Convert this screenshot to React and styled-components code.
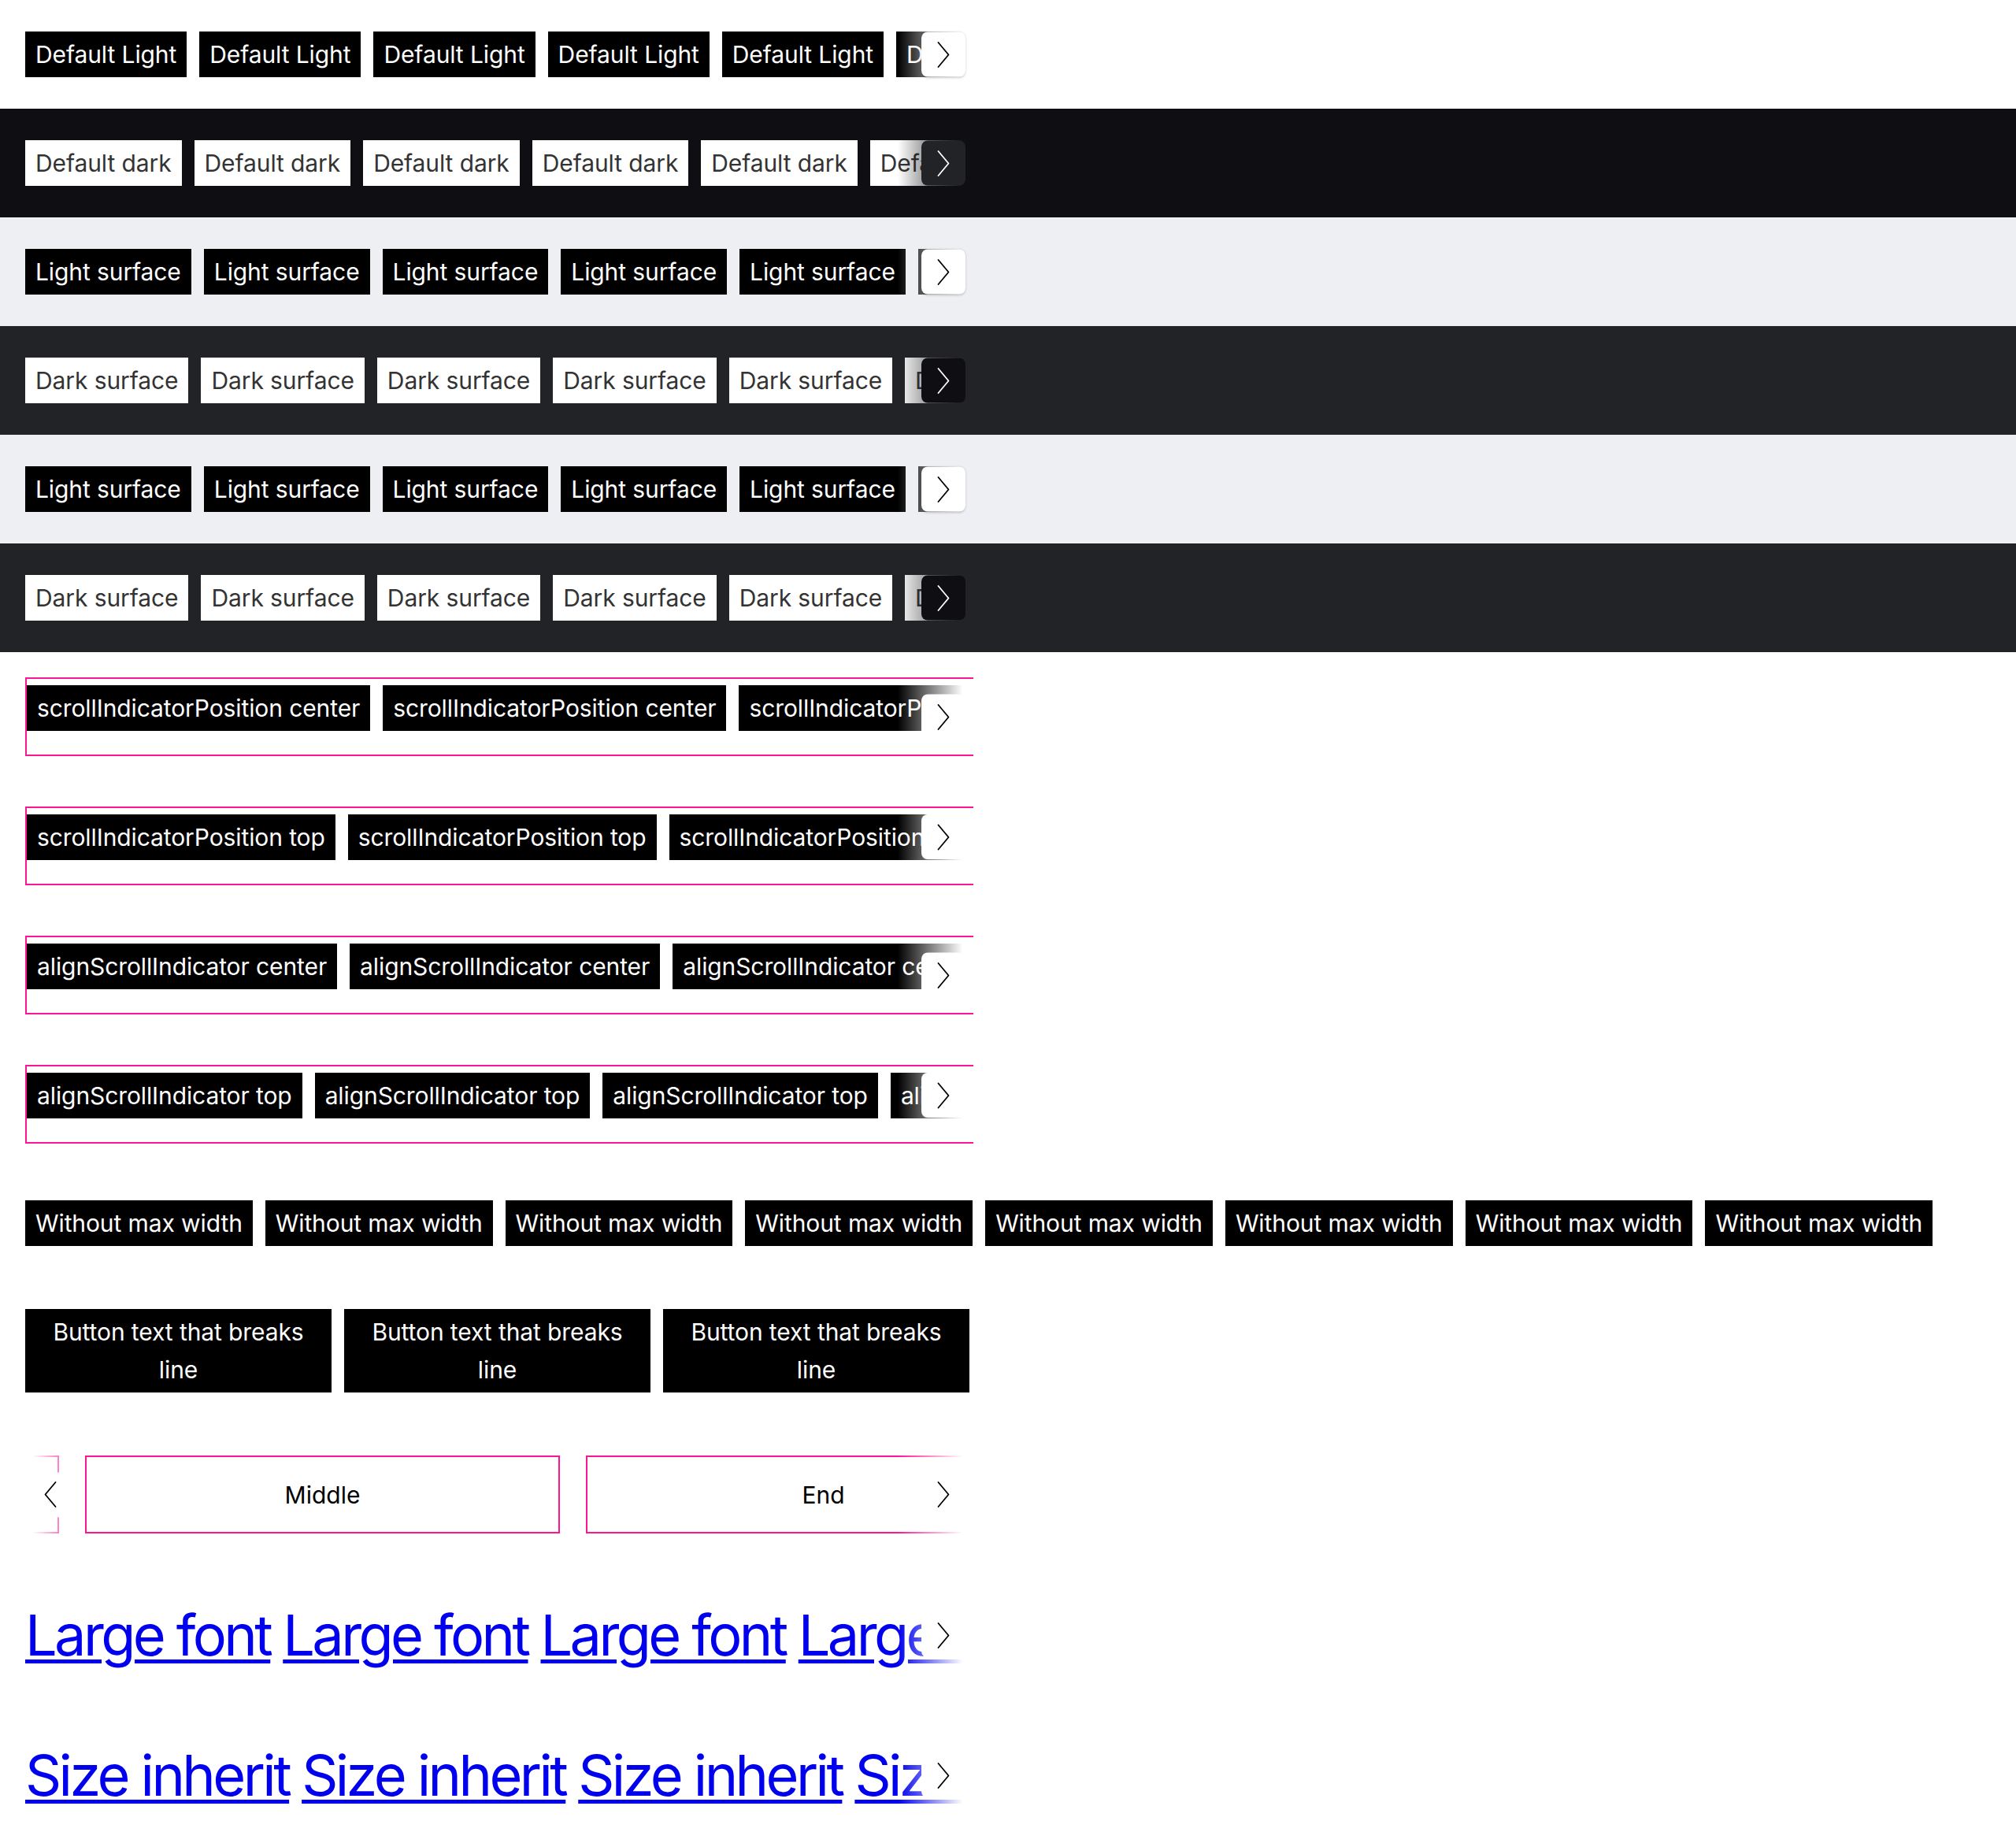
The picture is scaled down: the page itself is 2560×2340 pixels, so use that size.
import React, { useLayoutEffect, useRef } from 'react'
import styled, { createGlobalStyle, css } from 'styled-components'

const GlobalStyle = createGlobalStyle`
  * { box-sizing: border-box; }
  body {
    margin: 0;
    background: #fff;
    font-family: Inter, "Noto Sans", sans-serif;
  }
`;

const themes = {
  light: { bg: '#ffffff', btnBg: '#000000', btnFg: '#ffffff', navBg: '#ffffff', navFg: '#000', shadow: true },
  dark: { bg: '#0f0f13', btnBg: '#ffffff', btnFg: '#333333', navBg: '#222327', navFg: '#fff' },
  lightSurface: { bg: '#eeeff2', btnBg: '#000000', btnFg: '#ffffff', navBg: '#ffffff', navFg: '#000', shadow: true },
  darkSurface: { bg: '#222327', btnBg: '#ffffff', btnFg: '#333333', navBg: '#0f0f13', navFg: '#fff' },
  plain: { bg: '#ffffff', btnBg: '#000000', btnFg: '#ffffff', navBg: '#ffffff', navFg: '#000', shadow: false },
};

const Band = styled.section`
  background: ${p => p.$bg};
  padding: 32px;
`;

const Block = styled.div`
  padding: 32px;
`;

const ScrollBox = styled.div`
  position: relative;
  width: ${p => (p.$full ? 'auto' : '1204px')};
  ${p => p.$framed && css`
    height: 100px;
    border: 2px solid #ff1493;
    border-right: none;
  `}
`;

const Viewport = styled.div`
  overflow: hidden;
  padding: ${p => (p.$framed ? '8px 0 0' : '8px 0')};
`;

const Track = styled.div`
  display: flex;
  align-items: flex-start;
  gap: ${p => p.$gap}px;
  width: max-content;
`;

const Fade = styled.div`
  position: absolute;
  top: 0;
  bottom: 0;
  pointer-events: none;
  ${p => (p.$side === 'left'
    ? css`
      left: 0;
      width: 70px;
      background: linear-gradient(to left, ${p.$bg}00, ${p.$bg} 86%);
    `
    : css`
      right: 0;
      width: 96px;
      background: linear-gradient(to right, ${p.$bg}00, ${p.$bg} 86%);
    `)}
`;

const NavButton = styled.button`
  position: absolute;
  ${p => (p.$side === 'left' ? 'left: 4px;' : 'right: 10px;')}
  ${p => (p.$align === 'top' ? 'top: 8px;' : 'top: 50%; transform: translateY(-50%);')}
  width: 56px;
  height: 57px;
  display: flex;
  align-items: center;
  justify-content: center;
  padding: 0;
  border: none;
  border-radius: 8px;
  background: ${p => p.$bg};
  box-shadow: ${p => (p.$shadow ? '0 1px 3px rgba(0, 0, 0, 0.2)' : 'none')};
  cursor: pointer;
`;

const Btn = styled.button`
  flex: none;
  font-family: Inter, "Noto Sans", sans-serif;
  font-size: 30px;
  line-height: 48px;
  letter-spacing: -0.1px;
  padding: 5px 13px;
  border: none;
  border-radius: 0;
  background: ${p => p.$bg};
  color: ${p => p.$fg};
  white-space: nowrap;
  ${p => p.$wrap && css`
    width: 389px;
    white-space: normal;
    text-align: center;
  `}
`;

const Slide = styled.div`
  flex: none;
  width: 603px;
  height: 99px;
  display: flex;
  align-items: center;
  justify-content: center;
  border: 2px solid #ff1493;
  background: #fff;
  color: #000;
  font-size: 30px;
`;

const BigLink = styled.a`
  flex: none;
  font-size: 72px;
  line-height: 98px;
  letter-spacing: -0.05em;
  color: #0000ee;
  text-decoration: underline;
  text-decoration-thickness: 5px;
  text-underline-offset: 5px;
  white-space: nowrap;
`;

const Chevron = ({ dir = 'right', color }) => (
  <svg width="16" height="34" viewBox="0 0 16 34" fill="none">
    <path
      d={dir === 'right' ? 'M1.5 1.5 L14.5 17 L1.5 32.5' : 'M14.5 1.5 L1.5 17 L14.5 32.5'}
      stroke={color}
      strokeWidth="1.8"
      strokeLinecap="round"
      strokeLinejoin="round"
    />
  </svg>
);

const Scroller = ({ children, theme = themes.plain, align = 'center', framed, full, nav = true, left, scrollTo = 0, gap = 16 }) => {
  const ref = useRef(null);
  useLayoutEffect(() => {
    if (ref.current) ref.current.scrollLeft = scrollTo;
  }, [scrollTo]);

  return (
    <ScrollBox $framed={framed} $full={full}>
      <Viewport ref={ref} $framed={framed}>
        <Track $gap={gap}>{children}</Track>
      </Viewport>
      {left && (
        <>
          <Fade $side="left" $bg={theme.bg} />
          <NavButton $side="left" $align={align} $bg={theme.navBg}>
            <Chevron dir="left" color={theme.navFg} />
          </NavButton>
        </>
      )}
      {nav && (
        <>
          <Fade $side="right" $bg={theme.bg} />
          <NavButton $align={align} $bg={theme.navBg} $shadow={theme.shadow}>
            <Chevron color={theme.navFg} />
          </NavButton>
        </>
      )}
    </ScrollBox>
  );
};

const repeat = (n, label) => Array.from({ length: n }, (_, i) => ({ id: i, label }));

const bands = [
  { theme: themes.light, label: 'Default Light' },
  { theme: themes.dark, label: 'Default dark' },
  { theme: themes.lightSurface, label: 'Light surface' },
  { theme: themes.darkSurface, label: 'Dark surface' },
  { theme: themes.lightSurface, label: 'Light surface' },
  { theme: themes.darkSurface, label: 'Dark surface' },
];

const framedRows = [
  { label: 'scrollIndicatorPosition center', align: 'center' },
  { label: 'scrollIndicatorPosition top', align: 'top' },
  { label: 'alignScrollIndicator center', align: 'center' },
  { label: 'alignScrollIndicator top', align: 'top' },
];

export default function App() {
  return (
    <>
      <GlobalStyle />
      {bands.map((band, i) => (
        <Band key={i} $bg={band.theme.bg}>
          <Scroller theme={band.theme}>
            {repeat(8, band.label).map(item => (
              <Btn key={item.id} $bg={band.theme.btnBg} $fg={band.theme.btnFg}>{item.label}</Btn>
            ))}
          </Scroller>
        </Band>
      ))}

      {framedRows.map(row => (
        <Block key={row.label}>
          <Scroller framed align={row.align}>
            {repeat(5, row.label).map(item => (
              <Btn key={item.id} $bg="#000" $fg="#fff">{item.label}</Btn>
            ))}
          </Scroller>
        </Block>
      ))}

      <Block>
        <Scroller full nav={false}>
          {repeat(8, 'Without max width').map(item => (
            <Btn key={item.id} $bg="#000" $fg="#fff">{item.label}</Btn>
          ))}
        </Scroller>
      </Block>

      <Block>
        <Scroller nav={false}>
          {repeat(3, 'Button text that breaks line').map(item => (
            <Btn key={item.id} $wrap $bg="#000" $fg="#fff">{item.label}</Btn>
          ))}
        </Scroller>
      </Block>

      <Block>
        <Scroller left scrollTo={560} gap={33}>
          <Slide>Start</Slide>
          <Slide>Middle</Slide>
          <Slide>End</Slide>
        </Scroller>
      </Block>

      <Block>
        <Scroller>
          {repeat(6, 'Large font').map(item => (
            <BigLink key={item.id} href="#">{item.label}</BigLink>
          ))}
        </Scroller>
      </Block>

      <Block>
        <Scroller>
          {repeat(6, 'Size inherit').map(item => (
            <BigLink key={item.id} href="#">{item.label}</BigLink>
          ))}
        </Scroller>
      </Block>
    </>
  );
}
